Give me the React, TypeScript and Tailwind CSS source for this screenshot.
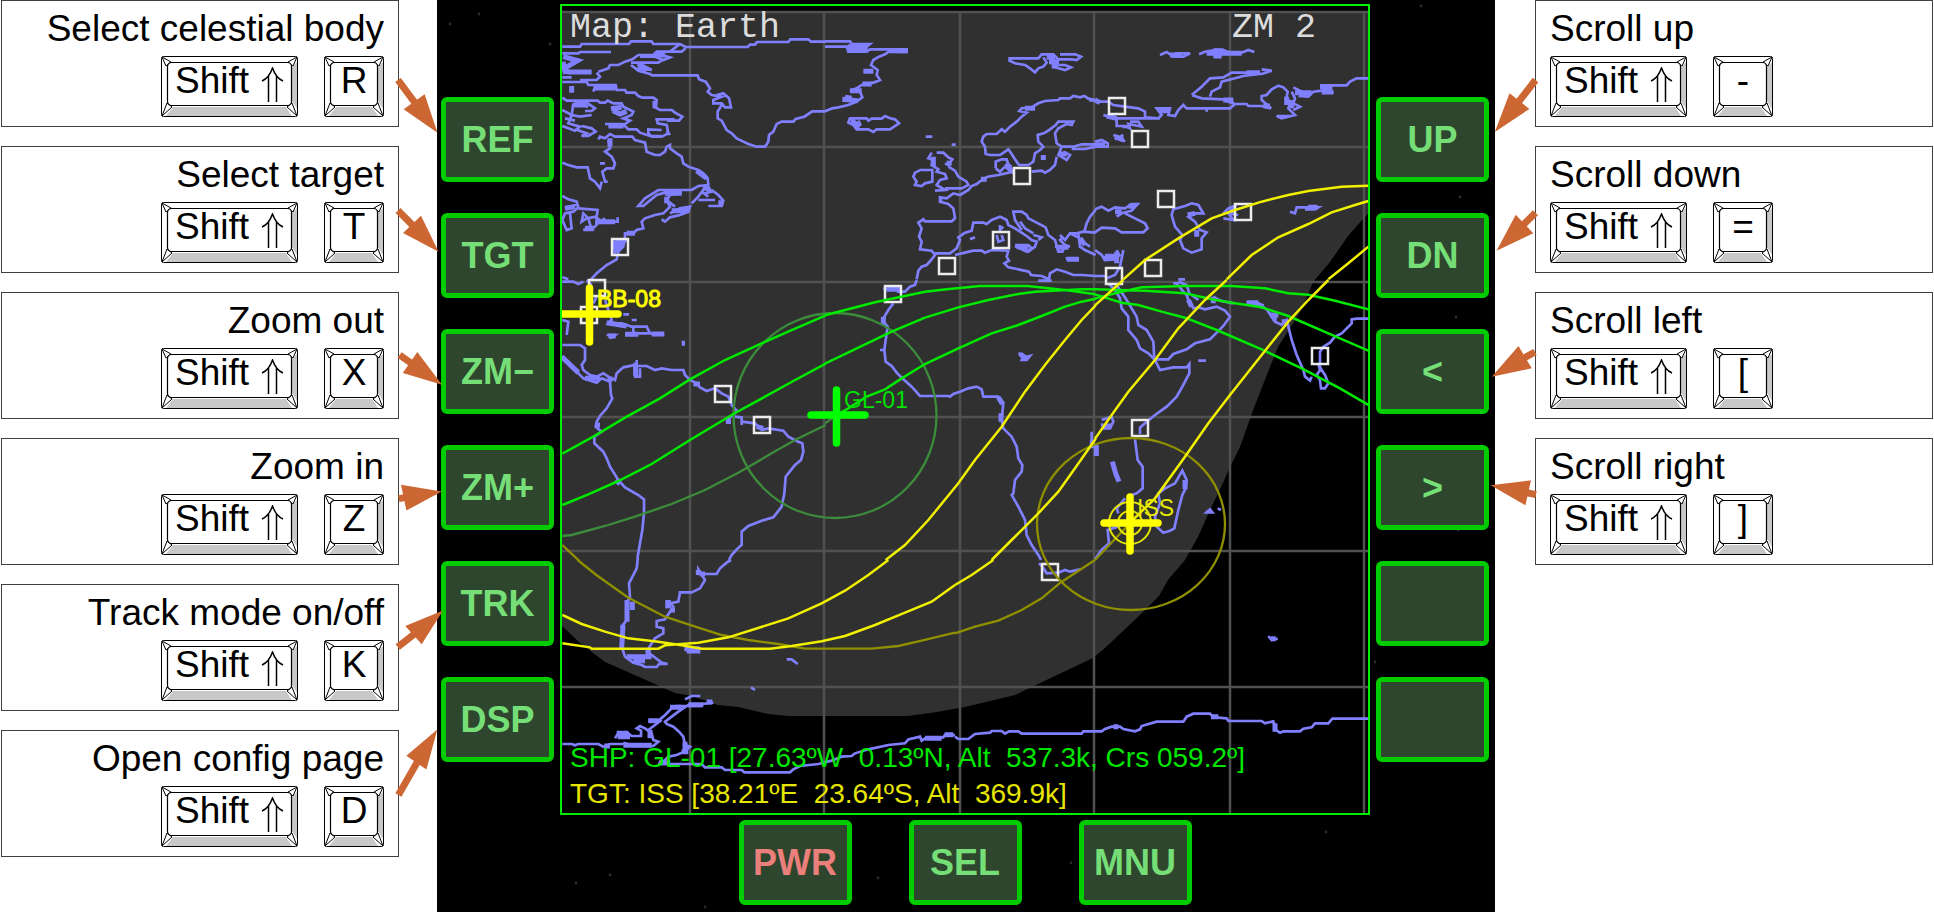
import React from "react";

type Shortcut = { title: string; keyCap: string };

const leftShortcuts: Shortcut[] = [
  { title: "Select celestial body", keyCap: "R" },
  { title: "Select target", keyCap: "T" },
  { title: "Zoom out", keyCap: "X" },
  { title: "Zoom in", keyCap: "Z" },
  { title: "Track mode on/off", keyCap: "K" },
  { title: "Open config page", keyCap: "D" },
];

const rightShortcuts: Shortcut[] = [
  { title: "Scroll up", keyCap: "-" },
  { title: "Scroll down", keyCap: "=" },
  { title: "Scroll left", keyCap: "[" },
  { title: "Scroll right", keyCap: "]" },
];

/* Each tile covers one part of the map; its paths are in thirds of a pixel. */
type Tile = {
  x: number;
  y: number;
  coast: string;
  thick?: string;
  dimGreen?: string;
  dimYellow?: string;
  green?: string;
  yellow?: string;
};

const tiles: Tile[] = [
  {
    x: 555,
    y: 0,
    coast:
      "M22 140H75L80 132H222L228 124H290L295 132H375L392 141H578L585 134H600L606 126H700L706 118H760L768 125H812 M22 160H70L75 156H168 M22 232H50 M75 240H125L135 230L125 218 M130 215L160 205L165 195H190L210 185L232 178L250 165H295L305 155H345L375 132 M392 145L380 155H330L305 160L345 172L325 180L300 170H255 M228 195L250 212L285 222L292 226H428L432 238L452 245L465 265L458 275L470 285L500 290L475 300V310H500L510 322H528L522 295L505 280L485 285 M500 315L488 335V355L500 362L515 390L530 400L545 415L565 425L580 432L605 440H630L640 425L642 405L655 395L665 372L680 365H715L722 357L748 350L772 334H812 M228 188H310L325 178 M250 205L290 210L262 195Z M22 246H95L100 255H182L185 270H210L215 278H240L250 288L262 293H295L305 300L300 322L315 330H350L360 338L382 350L372 362H345L350 358H305L308 370L335 375L340 400L320 410H290L280 400V388L320 390M335 392L345 405 M115 275L120 260 M22 293L35 302H128L135 308H150L158 302L175 310H200L205 320L235 335L230 345L205 355L225 362L210 372H150M165 378H210L220 388H245L255 398L285 408H320 M55 310L50 345L75 350M100 320L60 308H95L120 325L110 333H90 M22 330L50 345L40 370L75 380L60 392L22 378 M30 355L60 362 M75 350L110 345 M80 378L110 385L122 395L100 408H80L95 400L60 388 M130 418L135 410L150 415L165 402L180 410H232L240 420L270 428L275 455L300 465H315L330 455L335 440L345 435V445L365 460L380 470L385 490L400 500L430 510L445 520L458 535L460 555L430 558L410 570H310L270 595L250 618H265L280 605L305 585L330 578H380L345 585L335 600L345 620L325 640L300 645L270 655L260 665L265 685L245 690L235 700H210V710L205 740L190 755L185 778L155 795L125 820L108 838 M160 420L165 445L150 455L170 470L180 490L175 505H155L142 515L150 545H158 M135 490H150 M22 488L40 495L65 502H98L105 535L120 545L135 565L140 545 M320 658L330 665L345 652L375 645L400 635L405 620L375 625L345 640 M335 600L360 620 M410 610L430 590L445 570L458 560L470 575L450 580 M430 600H480 M460 618H500L505 602L490 585L470 570 M440 575L460 590 M22 588L40 598L65 605L70 622L55 635L30 640L22 660 M45 640L50 685L35 690L22 660 M30 625L70 612 M70 625L128 630L125 650L95 655L80 665L85 640L100 655L110 690H85L120 680L130 668L150 655 M120 650L140 665H188V652 M22 832L40 838",
    thick:
      "M25 170L68 182L28 205L40 216H110 M24 185L32 222 M50 258V278 M118 264H182 M168 326L200 322 M174 332L195 342L215 334 M160 378H205 M330 580H380 M335 590V610 M350 632H402 M300 302V325 M180 728L204 726L182 750Z M120 665H180 M90 685H118 M30 625L60 620 M165 415V440 M250 190L275 212 M300 165H330 M55 315H95 M425 512L455 535 M445 560L465 570 M215 700H240 M490 608H505",
  },
  {
    x: 825,
    y: 0,
    coast:
      "M0 124H75L80 132H135L125 140H75 M0 140H65L70 155H125L135 148H245V156H190L180 163L162 170L145 180L138 195L158 210L155 225L165 240L145 248L110 255L95 265L75 272L105 275L112 292L95 305L70 315L40 322L22 325L0 334 M75 355L70 368L85 375L95 388H130L145 396L155 388H195L222 370L210 358L195 355L180 348L170 356H140L130 362L125 355H78L88 372H105L100 362 M302 410H322 M380 434H392 M550 175H640L650 163H685L700 178H740L755 180L768 170L750 163H705 M550 180L570 190L600 195L615 205L630 217L640 205L655 200L665 188L655 172 M685 200L700 205L720 210L738 202L720 195H700 M812 300L790 296L778 288L765 292L745 288L735 295H705L700 300L660 303L640 310L620 322L590 325L583 333L605 338L590 350L575 365L555 380L540 395L530 388L515 402H485L475 410L470 425L480 440L482 462L495 465H525L540 455L550 448L560 462L570 478L582 495H610L625 485L630 460L645 450L655 440L640 425L638 405L660 398L675 388L692 375L700 365H745L740 375L725 372L700 385L690 400L695 430L710 440H745L770 433H812 M740 447H780L812 440 M710 440L700 465L725 480L735 465L715 455 M695 470L690 495L675 510L660 518L650 512L620 515 M512 505V485L530 478H545L550 495L560 500 M512 505L525 515L540 500L565 520 M565 515L520 525L488 530L470 540L455 552L440 558L430 570L405 585L385 580L365 595L345 592V605L370 612L385 625L390 655L380 664H300L295 658L280 668L290 685L282 710L290 725L285 748L320 752L330 765L320 778L305 795L290 800L280 812L275 838 M320 458L310 475L325 480L320 495L340 508L335 515L360 522L365 535L345 540L335 555L360 570L330 572 M335 458H355L370 472L382 478L370 495L360 490 M370 500L390 512L400 530L425 545L430 555L410 565H360 M290 508L270 518L265 530L275 545L270 555L290 558L300 550L322 545V510H290 M330 760H375L395 745L405 720L400 712L420 698L440 692L445 668H475L485 672L500 660L525 650L545 660L550 675L570 685L585 695L605 708L620 720L635 725L630 740L610 755L600 750 M570 735H610L620 745L605 755L570 738 M625 705L650 712L640 720 M590 690L570 660L565 635H590L605 645L610 655L635 668L662 682L670 705L690 720L700 755H712L720 735L735 740 M585 665L600 685L625 700 M435 718L450 712 M525 675V690L535 680 M515 705L520 725L535 720L530 705 M390 765L420 758L445 752H470L480 758L500 750L550 752L545 770L552 782L538 790L550 802L580 808L612 815L618 825L650 828L672 838L675 820L695 808L720 815L745 825H770L812 828 M705 705L720 720L735 700H755L775 695L812 698 M720 735L705 720L715 710 M760 700L765 740L780 750L812 765 M735 700L765 715 M765 720L795 740 M690 740H730 M812 630L795 650L785 670L778 695 M722 775H762",
    thick:
      "M68 140H125 M70 148H128 M115 214H145 M112 252H140 M52 298L98 302 M60 292L80 295 M80 362L105 380 M75 272H110 M665 172H690 M672 185H702 M680 198H700 M600 325H630 M545 490L560 515 M655 465V480 M705 462H725 M468 538H485 M765 715L780 735 M800 300V305 M325 470V500 M365 490H380 M725 778H762 M345 600H352 M575 740H610 M218 152H245 M695 742H730",
  },
  {
    x: 1095,
    y: 0,
    coast:
      "M195 165L215 156L235 170H265L285 160H240 M312 163L330 155L360 150H385L405 158H440L460 150L478 156 M0 305L20 305H40L55 315L90 320L130 325L150 335V352L190 355L200 345L185 325H225L220 345L240 348L250 330L265 315L275 325H405L420 312H455L460 318H500L515 322L528 325L500 300V288L515 285L530 268L550 257L565 262L578 275L575 290L585 310L580 325L600 345L560 355L545 348H590 M590 275L600 295L595 310L615 320L595 330 M595 262L620 275L615 288L640 290L655 275L700 270L715 280 M675 256H755L765 245L785 235H820 M290 285L320 260L345 235L385 232L410 218H455L500 222L530 212L500 208 M290 285L320 295L385 298L410 305L400 295 M385 300L420 312 M345 290L350 275L375 262L380 245L420 235L445 228L490 222 M25 345L60 355H195 M65 355V378H90L105 385L100 372L140 380L130 365H105 M0 425L20 420L38 430V440H0 M55 405L70 410L90 425 M60 418L85 405 M0 628L20 620L40 632L60 622L90 625L110 612H128L110 632L80 640L65 650 M90 640L120 655L150 670L158 685L145 697H80L60 685L20 683L0 697 M235 628L270 618L290 610L310 615L325 640L300 640L280 650L300 665L315 690L335 697L320 715V748L290 758L265 745L255 720L262 705L240 680L230 645Z M385 640L400 625L425 615 M385 655L415 660L400 640L430 645 M585 635L600 640L605 622H670L660 628H630 M0 750L20 765L30 780L60 778 M30 765H60 M85 750L75 800L60 825L35 835 M65 750L75 770 M0 828H35 M250 838H270 M335 325V335",
    thick:
      "M225 165H260 M335 160H440 M355 152H385 M355 168H380 M600 278H650 M675 260H712 M680 276H715 M0 300L15 308 M195 332H225 M385 300H415 M100 618L120 620 M35 348L65 355 M90 375V385 M60 410L85 420 M25 775H60 M65 755V790 M575 290V315 M590 300V325 M505 318H525 M0 434H30 M410 620V645 M640 622H668 M455 218H495 M60 635H80 M305 690V710 M278 645L300 640",
    yellow:
      "M395 838L470 765L550 712L640 672L710 637L780 615L820 603 M85 838L150 780L250 715L350 655L420 630L500 605L580 585L640 573L740 560L820 557 M700 838L760 790L820 740",
  },
  {
    x: 555,
    y: 280,
    coast:
      "M22 5H55L70 12L85 5 M95 0L110 15 M125 50L115 70 M150 60L170 120L160 130H200L230 140H275L285 160H325 M210 160H290 M235 140V160 M155 165H180L165 175 M205 103H222 M230 120H245 M22 120L40 125L35 165 M22 195H75L90 205V240L80 255L85 270L105 285L125 290L145 280L160 290L180 300L185 280L205 262L240 255V290H255V265 M245 240V258H275L300 270L320 265L350 270H385L390 285L405 300L425 310L435 322L455 333L480 325L500 340L520 350L530 375L545 392L535 405L520 415L525 430 M540 410L560 412V435 M560 425L600 430L620 450L640 445L685 452L700 470L730 485L742 490L745 515L738 540L720 555L692 590L688 640L680 680L655 712L620 722L580 738L560 755V795L545 808L530 825L522 840 M22 228L45 250L65 275L85 295L125 308L140 295L165 305L168 345L172 355L155 385L135 408L125 425L122 440L140 455L118 470V490L145 515L155 535L165 560L190 600L210 622L250 645L267 658V700L262 750L255 790L248 830V840 M105 285L135 300",
    thick:
      "M155 128L215 138 M210 163H250 M290 162H328 M380 190H390 M90 295H135 M242 248V288 M165 290V305 M22 232L70 278 M160 168H182 M415 312H435 M520 412V432 M605 440L625 445 M120 435H135 M182 600L195 612",
    dimGreen: "M22 768L50 765L150 738L240 710L350 672L450 630L550 578L650 520L720 480L812 435",
    dimYellow: "M22 795L72 842",
    green:
      "M22 521L120 467L210 413L315 355L405 298L510 240L620 190L715 148L812 106 M22 675L100 643L190 603L290 552L405 480L535 402L630 350L715 303L812 251",
  },
  {
    x: 825,
    y: 280,
    coast:
      "M275 0L270 15L255 20L240 35L215 35 M175 25L200 30L225 25 M205 70L190 90L178 110L175 125L188 140L182 180L178 210H165 M178 210L182 245L200 258L215 278L232 295L260 320L285 348H370L375 350L385 342L405 335L430 325L455 320L470 328L475 350H520L535 368L530 420L535 445L560 470L575 500L580 535L592 555L590 575L570 600L565 640L560 645L580 680L600 720L605 765L620 795L640 825L648 840 M580 220L595 225L590 240L605 240L615 228L598 232 M800 455V500H812 M640 2H680",
    thick: "M175 110V135 M185 28H225 M585 222L605 236 M520 352L532 372 M528 400V425 M802 480V505",
    dimGreen: "M0 430L30 408",
    green:
      "M0 106L150 67L300 35L365 28L465 18H608L720 30L812 43 M0 251L100 203L200 155L300 113L400 82L490 60L580 42L630 35L770 28H812 M35 405L70 385L125 350L180 328L230 295L300 252L400 205L500 160L580 135L650 108L720 80L770 65L812 56",
    yellow:
      "M500 840L560 780L640 700L700 635L750 565L812 476 M182 840L240 795L310 720L400 610L450 540L530 440L600 335L660 255L720 180L770 120L812 76",
  },
  {
    x: 1095,
    y: 280,
    coast:
      "M40 10L60 30L75 55L80 85L100 110V150L125 180L135 205L160 220L180 240L195 270L235 262H275L283 252V280L262 320L245 350L215 380L180 405L150 430L135 443V462 M65 15L95 60L110 85L125 110L130 135L155 150L175 185L178 238H220L235 222L275 208L300 190L345 178L365 158L385 138L405 110L390 92L365 80L330 88L310 82L295 85L280 60L275 45L265 35L245 10H235 M250 5L275 15L285 45 M290 45L310 60 M355 50L375 62L415 70 M310 242H333 M455 68L490 70L515 88L530 110L540 125L560 135L575 120L580 140L590 180L605 225L625 270L630 290L645 302L650 290 M820 116H785L770 118V130L740 160L720 170L705 188L685 200L675 215V250 M670 250L675 270L665 285L675 300L678 325H690L700 310L690 285L680 270Z M120 478L128 540L143 560V625L125 640L110 645 M90 655L65 685L70 700 M68 740L38 750L42 790L20 810L0 838 M20 420L50 410L55 425L45 445H25L20 430 M262 572L275 600L272 625L262 645L250 690L238 745L225 752L205 758L185 740L180 710L195 670L190 640L210 625L240 610Z M335 697L345 688L352 697Z M368 685L378 690",
    thick:
      "M525 105H550 M532 115H545 M455 68H490 M280 60L290 80 M4 495V528 M52 545L62 580L72 605 M25 438H50 M560 125H575 M270 600V628 M355 50V70 M480 70L505 80",
    green:
      "M0 43L80 68L130 75L200 95L270 113L365 150L500 208L620 265L735 325L820 375 M0 28L150 32L270 40L350 58L420 70L500 82L580 108L700 160L820 212 M0 56L60 40L140 22L270 18H410L510 25L580 40L640 44L720 62L820 88",
    dimYellow: "M0 840L100 735",
    yellow:
      "M0 476L50 405L100 335L180 240L250 145L330 60L395 0 M0 76L85 0 M105 728L180 655L270 530L340 430L405 345L500 225L580 125L640 60L700 0",
  },
  {
    x: 555,
    y: 560,
    coast:
      "M248 0L245 25L235 45L222 70L225 110L215 130V180L200 200L205 225L200 260L210 290L235 308L260 315L270 321H305L312 312H338L320 308L290 285L275 275L290 250L300 235L325 220V205L305 200V183L330 178L345 155L355 140L340 125 M335 120V145 M345 130L370 125L375 97H410L435 85L450 60L430 28V42H485L495 25L515 8L528 0 M695 298H710L728 312 M588 382L600 390 M22 552H50L60 556L70 552H130L145 560L165 552H205 M180 535L190 520H220L230 528H258V512L245 505L255 498L270 505L290 520L295 540L310 545L295 558H240L205 548 M280 482H310L325 470L350 445L365 438H440 M390 418L410 408H436 M475 428L440 432L400 435L370 455L350 470L330 485L335 492L355 500L372 515L385 530L390 555L405 560L388 575L365 585L340 590L325 605L310 612H440L450 622H500L510 630H560L568 637H705L715 628L735 618L790 612L830 602L860 590L890 588L900 580L940 568L1000 555L1050 550L1060 538L1095 530L1100 542L1115 532H1165L1172 522L1200 526 M280 510L300 495L320 480",
    thick:
      "M216 120V185 M232 125V150 M204 195L200 265 M215 290H290 M235 302H270 M280 270V295 M388 266H436 M395 273H436 M185 520H220 M188 530H225 M205 556H290 M345 442H380 M400 434H445 M455 426H472 M280 482H310 M285 510V535 M430 30V45 M435 42H450 M312 608H345 M390 545V570 M380 575H400 M148 558H165 M1170 524H1195 M1110 535H1160 M340 120V145 M345 150H360",
    dimYellow:
      "M68 0L120 42L220 113L330 170L430 203L500 225L580 240L670 252L750 266H950L1030 258L1100 242L1200 218",
    yellow:
      "M22 165L80 192L150 215L220 235L310 245L380 256L440 266H645L710 258L800 244L870 228L960 195L1050 158L1130 125L1200 75 M22 250L105 262L110 266H310L330 256L430 248L520 232L600 207L700 175L800 130L870 92L940 45L1000 0",
  },
  {
    x: 955,
    y: 560,
    coast:
      "M0 530L10 537H40L60 522L105 518L110 513H140L150 521L162 514H190L200 521H380L385 514H440L450 507L470 500H495L505 507L540 514L555 508L560 498L605 485H685L695 470L715 461H765L775 472L815 475L820 483H920L930 490L955 484L962 510L975 518L985 514H1035L1045 506L1070 502L1080 490H1120L1132 476H1242 M940 228L950 240L968 236 M252 10L262 20L275 40L310 38L330 30L345 35L375 28",
    thick: "M768 470H790 M960 490V515 M948 236H962 M475 500H490",
    dimYellow: "M0 220L60 200L130 182L200 150L260 115L316 68L420 0",
    yellow: "M0 75L50 45L115 0",
  },
];

const cities: [number, number][] = [
  [620, 247], [1022, 176], [1001, 240], [947, 266], [1117, 106], [1140, 139],
  [1166, 199], [1243, 212], [1153, 268], [1114, 276], [597, 288], [589, 315],
  [723, 394], [762, 425], [893, 294], [1320, 356], [1140, 428], [1050, 572],
];

function Layer({ pick, stroke, width }: { pick: keyof Tile; stroke: string; width: number }) {
  return (
    <g fill="none" stroke={stroke} strokeWidth={width}>
      {tiles.map((t) =>
        t[pick] ? (
          <path key={`${t.x}-${t.y}`} transform={`translate(${t.x} ${t.y}) scale(0.33333)`} d={String(t[pick])} />
        ) : null
      )}
    </g>
  );
}

function WorldMap() {
  return (
    <svg className="absolute inset-0 h-full w-full" viewBox="562 6 806 807" preserveAspectRatio="none" aria-hidden="true">
      <path
        fill="#303030"
        d="M562 11H1369V213L1362 220L1348 236L1330 262L1313 282L1305 302L1297 317L1278 347L1266 377L1252 413L1240 447L1230 467L1223 483L1210 510L1198 537L1185 560L1168 580L1159 596L1142 613L1105 648L1093 658L1038 684L1015 695L965 707L937 712L908 716H788L768 714L738 707L718 705L692 696L675 693L655 684L605 662L580 643L562 626Z"
      />
      <path
        fill="none"
        stroke="#515151"
        strokeWidth="2.5"
        d="M562 12H1368 M562 147H1368 M562 282H1368 M562 417H1368 M562 551H1368 M562 687H1368 M690 12V814 M824 12V814 M960 12V814 M1094 12V814 M1230 12V814 M1364 12V814"
      />
      <Layer pick="coast" stroke="#8080ff" width={8} />
      <Layer pick="thick" stroke="#8080ff" width={15} />
      <g fill="none" stroke="#ececec" strokeWidth="2.5">
        {cities.map(([x, y]) => (
          <rect key={`${x}-${y}`} x={x - 8} y={y - 8} width="16" height="16" />
        ))}
      </g>
      <Layer pick="dimYellow" stroke="#8f8f00" width={7} />
      <Layer pick="dimGreen" stroke="#3c8c3c" width={7} />
      <ellipse cx="835" cy="415.5" rx="101.5" ry="102.5" fill="none" stroke="#3c8c3c" strokeWidth="2.3" />
      <ellipse cx="1131" cy="524" rx="94" ry="86" fill="none" stroke="#8f8f00" strokeWidth="2.3" />
      <Layer pick="green" stroke="#00ea00" width={7.5} />
      <Layer pick="yellow" stroke="#f0f000" width={7.5} />
      <g fill="none" stroke="#e6e600" strokeWidth="2">
        <circle cx="1130" cy="523" r="21" />
        <circle cx="1130" cy="523" r="12" />
      </g>
      <path stroke="#00ff00" strokeWidth="7.5" strokeLinecap="round" d="M836.5 390V443 M811 415H865" />
      <path stroke="#ffff00" strokeWidth="7.5" strokeLinecap="round" d="M589.5 288V342 M560 314H618 M1130 497V551 M1104 523H1158" />
      <g fontFamily="'Liberation Sans', Arial, sans-serif" fontSize="23">
        <text x="844" y="408" fill="#00e000">GL-01</text>
        <text x="597" y="307" fill="#ffff00" stroke="#ffff00">BB-08</text>
        <text x="1137" y="516" fill="#e6e600">ISS</text>
      </g>
    </svg>
  );
}

function KeyCap({ wide, children }: { wide?: boolean; children: React.ReactNode }) {
  const w = wide ? 137 : 60;
  return (
    <kbd
      className={
        "relative flex h-[61px] justify-center pt-1 font-['Liberation_Sans',Arial,sans-serif] text-[37px] leading-[42px] " +
        (wide ? "w-[137px]" : "w-[60px]")
      }
    >
      <svg className="absolute inset-0 h-full w-full" viewBox={`0 0 ${w} 61`} aria-hidden="true">
        <rect x="0.5" y="0.5" width={w - 1} height="60" rx="2" fill="#fff" stroke="#000" />
        <path fill="#c8c8c8" d={`M12 51H${w - 12}L${w - 6} 60H5Z M${w - 6} 11L${w - 1} 6V53L${w - 6} 45Z`} />
        <path
          fill="#fff"
          stroke="#000"
          d={`M1 1L5 10L10 6Z M${w - 1} 1L${w - 5} 10L${w - 10} 6Z M1 60L6 47L11 51Z M${w - 1} 60L${w - 6} 47L${w - 11} 51Z`}
        />
        <rect x="6.5" y="6.5" width={w - 13} height="43" rx="4" fill="#fff" stroke="#000" strokeWidth="1.2" />
      </svg>
      <span className="relative flex items-start">
        {children}
        {wide && (
          <svg className="mt-[7px] ml-3 h-[35px] w-[23px]" viewBox="0 0 23 35" fill="none" stroke="#000" strokeWidth="1.5" aria-hidden="true">
            <path d="M1 14Q8 11 11.5 1Q15 11 22 14 M7.5 9V35 M15.5 9V35" />
          </svg>
        )}
      </span>
    </kbd>
  );
}

function ShortcutCard({ item, side }: { item: Shortcut; side: "left" | "right" }) {
  return (
    <section
      className={
        "flex flex-col gap-1.5 border border-[#404040] bg-white px-3.5 pt-[7px] pb-[9px] " +
        (side === "left" ? "items-end" : "items-start")
      }
    >
      <h2 className="text-[37px] leading-[42px] whitespace-nowrap">{item.title}</h2>
      <div className="flex gap-[26px]">
        <KeyCap wide>Shift</KeyCap>
        <KeyCap>{item.keyCap}</KeyCap>
      </div>
    </section>
  );
}

function MfdButton({ label, name, power }: { label: string; name?: string; power?: boolean }) {
  return (
    <button
      type="button"
      aria-label={name}
      className={
        "flex h-[85px] w-[113px] items-center justify-center rounded-md border-[5px] border-[#00cc00] bg-[#2e452e] font-['Liberation_Sans',Arial,sans-serif] text-[36px] leading-none font-bold " +
        (power ? "text-[#ea7f7b]" : "text-[#76de76]")
      }
    >
      {label}
    </button>
  );
}

/* tail x/y, tip x/y, then the two back corners of the head */
type Arrow = [number, number, number, number, number, number, number, number];

const leftArrows: Arrow[] = [
  [398, 80, 437.5, 132.7, 403.6, 109.3, 424.6, 94.3],
  [398, 210.5, 438.6, 251.7, 403, 233, 421, 215.7],
  [399.6, 355, 442, 384.8, 417.3, 351.9, 402.8, 372.9],
  [398.8, 498.6, 441.7, 491.5, 401, 484.8, 406.4, 510.5],
  [397.7, 647, 443, 610.5, 405.3, 626, 421.7, 644.2],
  [398.4, 795, 437.3, 729.5, 406.4, 755.7, 426.4, 769.6],
];

const rightArrows: Arrow[] = [
  [1535.5, 80, 1494.8, 132, 1509.6, 93.3, 1529.4, 109],
  [1535.5, 212.7, 1496.6, 250.7, 1515.7, 214.7, 1533.3, 233.3],
  [1535, 352, 1491.8, 376.7, 1518.5, 346, 1531.7, 368.3],
  [1536, 494.7, 1490.7, 485.3, 1531, 480.3, 1525.4, 505.3],
];

function Arrows({ arrows }: { arrows: Arrow[] }) {
  return (
    <g>
      {arrows.map(([x, y, tx, ty, ax, ay, bx, by]) => (
        <g key={y}>
          <path d={`M${x} ${y}L${(ax + bx + tx) / 3} ${(ay + by + ty) / 3}`} stroke="#cc6633" strokeWidth="7" />
          <path d={`M${tx} ${ty}L${ax} ${ay}L${bx} ${by}Z`} fill="#cc6633" />
        </g>
      ))}
    </g>
  );
}

/* faint stars behind the instrument */
const stars: [number, number][] = [
  [13, 24], [42, 14], [113, 44], [47, 511], [139, 883], [173, 875], [268, 907], [441, 878],
  [634, 863], [889, 832], [984, 6], [938, 662], [1023, 197], [1019, 317], [1021, 530],
];

export default function App() {
  return (
    <main className="grid min-h-screen grid-cols-[437fr_1058px_439fr] bg-white font-['Liberation_Sans',Arial,sans-serif] text-black">
      <div className="relative z-10 flex flex-col gap-[19px] pr-[38px] pl-px">
        {leftShortcuts.map((s) => (
          <ShortcutCard key={s.title} item={s} side="left" />
        ))}
        <svg className="pointer-events-none absolute top-0 -right-[13px] h-[912px] w-[60px]" viewBox="390 0 60 912" aria-hidden="true">
          <Arrows arrows={leftArrows} />
        </svg>
      </div>

      <div className="relative flex flex-col items-center gap-[5px] bg-black pt-1 pr-0.5">
        <svg className="absolute top-0 left-0 h-[912px] w-[1058px]" viewBox="0 0 1058 912" fill="#2c2c2c" aria-hidden="true">
          {stars.map(([x, y]) => (
            <circle key={`${x}-${y}`} cx={x} cy={y} r="1.4" />
          ))}
        </svg>
        <div className="relative flex gap-1.5">
          <div className="flex flex-col gap-[31px] pt-[93px]">
            {["REF", "TGT", "ZM−", "ZM+", "TRK", "DSP"].map((b) => (
              <MfdButton key={b} label={b} />
            ))}
          </div>
          <div className="relative flex h-[811px] w-[810px] flex-col justify-between overflow-hidden border-2 border-[#00ee00] bg-black">
            <WorldMap />
            <div className="relative flex justify-between pt-0.5 pr-[52px] pl-2 font-['Liberation_Mono',monospace] text-[35px] leading-10 text-[#dcdcdc]">
              <h1>Map: Earth</h1>
              <p>ZM 2</p>
            </div>
            <div className="relative pb-px pl-2 text-[28px] leading-9 whitespace-pre">
              <p className="text-[#00e600]">{"SHP: GL-01 [27.63ºW  0.13ºN, Alt  537.3k, Crs 059.2º]"}</p>
              <p className="text-[#e6e600]">{"TGT: ISS [38.21ºE  23.64ºS, Alt  369.9k]"}</p>
            </div>
          </div>
          <div className="flex flex-col gap-[31px] pt-[93px]">
            {["UP", "DN", "<", ">"].map((b) => (
              <MfdButton key={b} label={b} />
            ))}
            <MfdButton label="" name="Unassigned 1" />
            <MfdButton label="" name="Unassigned 2" />
          </div>
        </div>
        <div className="relative flex gap-[57px]">
          <MfdButton label="PWR" power />
          <MfdButton label="SEL" />
          <MfdButton label="MNU" />
        </div>
      </div>

      <div className="relative z-10 flex flex-col gap-[19px] pr-px pl-10">
        {rightShortcuts.map((s) => (
          <ShortcutCard key={s.title} item={s} side="right" />
        ))}
        <svg className="pointer-events-none absolute top-0 -left-[10px] h-[912px] w-[60px]" viewBox="1485 0 60 912" aria-hidden="true">
          <Arrows arrows={rightArrows} />
        </svg>
      </div>
    </main>
  );
}
